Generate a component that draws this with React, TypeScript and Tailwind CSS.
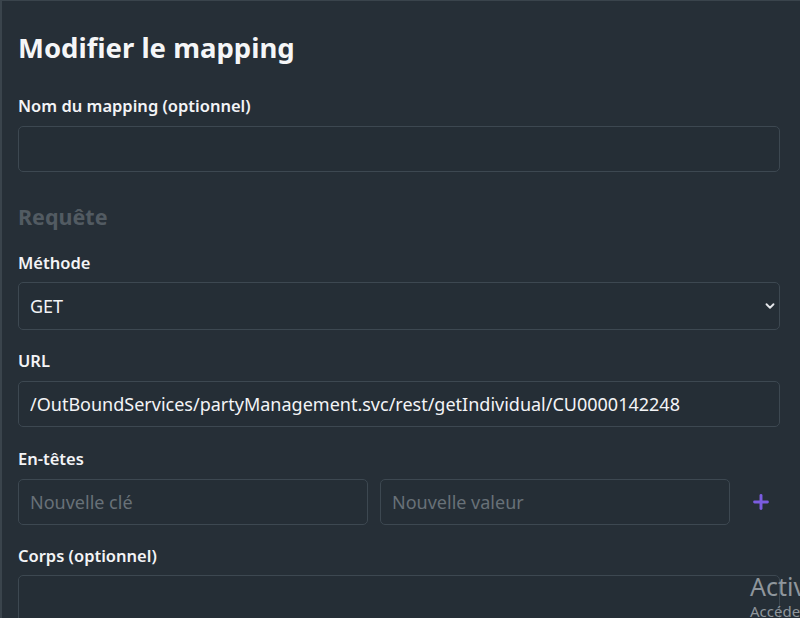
import { ChevronDown, Plus } from "lucide-react";

const font = { fontFamily: '"Noto Sans", "Open Sans", sans-serif' };

function Label({ children }: { children: React.ReactNode }) {
  return (
    <label className="block text-[16.5px] font-semibold leading-[24px] text-[#f3f4f6]">
      {children}
    </label>
  );
}

const inputCls =
  "w-full rounded-[5px] border border-[#3d4851] bg-[#252e36] px-[11px] text-[18px] text-[#f3f4f6] outline-none placeholder:text-[#687178]";

export default function App() {
  return (
    <div
      className="relative h-[618px] w-[800px] overflow-hidden bg-[#262f37]"
      style={font}
    >
      <div className="h-full border-l-2 border-t border-[#3a444c] pl-[16px] pr-[20px] pt-[28px]">
        <h1 className="text-[27.5px] font-bold leading-[38px] text-[#f5f6f7]">
          Modifier le mapping
        </h1>

        <div className="mt-[27px]">
          <Label>Nom du mapping (optionnel)</Label>
          <input className={inputCls + " mt-[8px] h-[46px]"} />
        </div>

        <h2 className="mt-[31px] text-[21.5px] font-bold leading-[28px] text-[#525b62]">
          Requête
        </h2>

        <div className="mt-[20px]">
          <Label>Méthode</Label>
          <div className="relative mt-[7px]">
            <select
              className={inputCls + " h-[48px] appearance-none"}
              defaultValue="GET"
            >
              <option>GET</option>
              <option>POST</option>
              <option>PUT</option>
              <option>DELETE</option>
            </select>
            <ChevronDown
              className="pointer-events-none absolute right-[3px] top-[17px] h-[14px] w-[14px] text-[#e5e7eb]"
              strokeWidth={3.2}
            />
          </div>
        </div>

        <div className="mt-[19px]">
          <Label>URL</Label>
          <input
            className={inputCls + " mt-[8px] h-[46px]"}
            defaultValue="/OutBoundServices/partyManagement.svc/rest/getIndividual/CU0000142248"
          />
        </div>

        <div className="mt-[20px]">
          <Label>En-têtes</Label>
          <div className="mt-[8px] flex items-center gap-[12px]">
            <input className={inputCls + " h-[46px] flex-1"} placeholder="Nouvelle clé" />
            <input className={inputCls + " h-[46px] flex-1"} placeholder="Nouvelle valeur" />
            <button className="flex h-[46px] w-[38px] shrink-0 items-center justify-center text-[#7b5ce0]">
              <Plus className="h-[22px] w-[22px]" strokeWidth={3.2} />
            </button>
          </div>
        </div>

        <div className="mt-[19px]">
          <Label>Corps (optionnel)</Label>
          <textarea className={inputCls + " mt-[7px] h-[120px] resize-none"} />
        </div>
      </div>

      <div className="pointer-events-none absolute left-[750px] top-[570px] text-[#8f969c]">
        <div className="whitespace-nowrap text-[25px] leading-[32px]">Activer Windows</div>
        <div className="whitespace-nowrap text-[15px] leading-[18px]">Accédez aux paramètres</div>
      </div>
    </div>
  );
}
